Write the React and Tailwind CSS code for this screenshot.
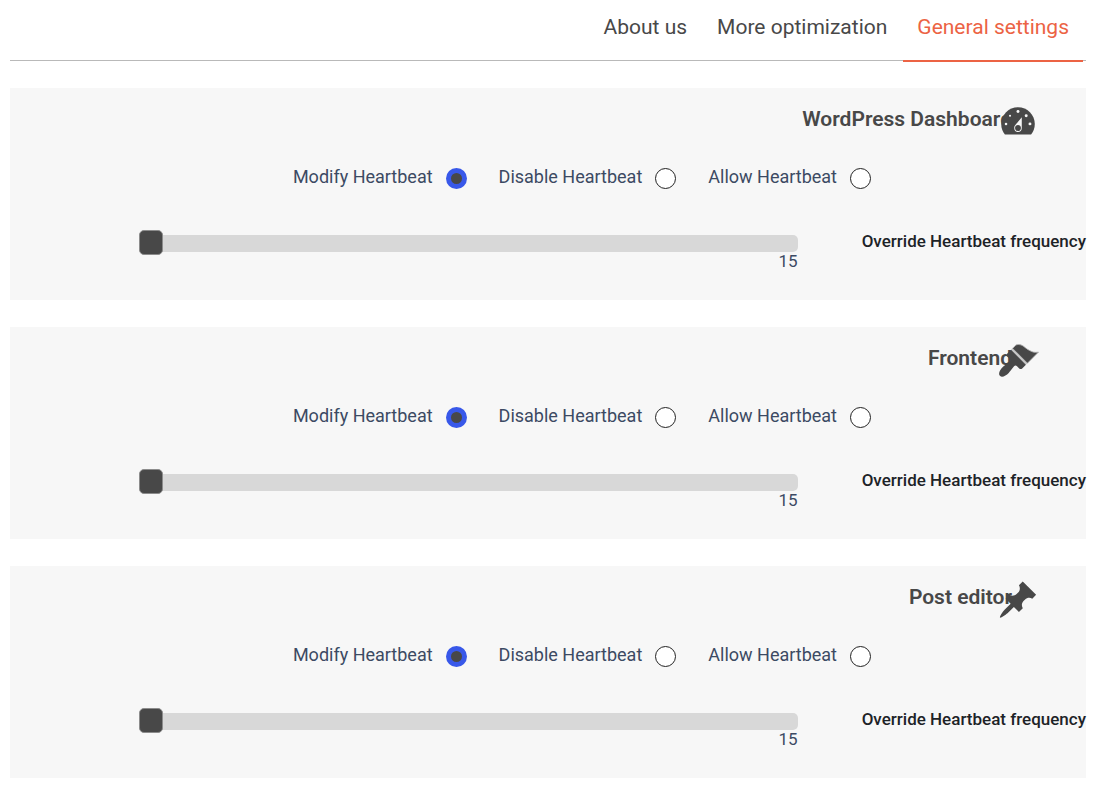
import React, { useState } from 'react';
import clsx from 'clsx';

const tabs = ['About us', 'More optimization', 'General settings'];
const modes = ['Modify Heartbeat', 'Disable Heartbeat', 'Allow Heartbeat'];

const DashboardIcon = () => (
  <svg viewBox="0 0 20 20" className="size-[42px]" fill="currentColor" aria-hidden="true">
    <path d="M3.76 16h12.48c1.1-1.37 1.76-3.11 1.76-5 0-4.42-3.58-8-8-8s-8 3.58-8 8c0 1.89.66 3.63 1.76 5z" />
    <g className="fill-[#f7f7f7]">
      <circle cx="10" cy="5" r="0.7" />
      <circle cx="6.2" cy="7" r="0.5" />
      <circle cx="13.9" cy="7" r="0.7" />
      <circle cx="4.3" cy="10.9" r="0.6" />
      <circle cx="15.7" cy="10.9" r="0.7" />
      <path
        fillRule="evenodd"
        d="M11.8 7.7v5.1c0 1.1-.7 2-1.8 2s-1.8-.9-1.8-2c0-.57.24-1.08.63-1.45zM11.4 12.8c0-.8-.6-1.4-1.4-1.4s-1.4.6-1.4 1.4.6 1.5 1.4 1.5 1.4-.7 1.4-1.5z"
      />
    </g>
  </svg>
);

const BrushIcon = () => (
  <svg viewBox="0 0 20 20" className="size-[42px]" fill="currentColor" aria-hidden="true">
    <path className="fill-[#c8c8c8]" d="M6.7 4.7l.71-.71 7.07 7.07-.71.71z" />
    <path
      className="stroke-[#b4b4b4]"
      strokeWidth="0.4"
      d="M14.48 11.06L7.41 3.99l1.5-1.5c.5-.56 2.3-.47 3.51.32 1.21.8 1.43 1.28 2.91 2.1 1.18.64 2.45 1.26 4.45.85z"
    />
    <path d="M13.77 11.77L6.7 4.7 4.93 6.47c-.39.39-.39 1.02 0 1.41l1.06 1.06c.39.39.39 1.03 0 1.42-.6.6-1.43 1.11-2.21 1.69-.35.26-.7.53-1.01.84C1.43 14.23.4 16.08 1.4 17.07c.99 1 2.84-.03 4.18-1.36.31-.31.58-.66.85-1.02.57-.78 1.08-1.61 1.69-2.21.39-.39 1.02-.39 1.41 0l1.06 1.06c.39.39 1.02.39 1.41 0z" />
  </svg>
);

const PinIcon = () => (
  <svg viewBox="0 0 20 20" className="size-[42px]" fill="currentColor" aria-hidden="true">
    <path d="M10.44 3.02l1.82-1.82 6.36 6.35-1.83 1.82c-1.05-.68-2.48-.57-3.41.36l-.75.75c-.92.93-1.04 2.35-.35 3.41l-1.83 1.82-2.41-2.41-2.8 2.79c-.42.42-3.38 2.71-3.8 2.29s1.86-3.39 2.28-3.81l2.79-2.79L4.1 9.36l1.83-1.82c1.05.69 2.48.57 3.4-.36l.75-.75c.93-.92 1.05-2.35.36-3.41z" />
  </svg>
);

const sections = [
  { id: 'dashboard', title: 'WordPress Dashboard', icon: DashboardIcon },
  { id: 'frontend', title: 'Frontend', icon: BrushIcon },
  { id: 'editor', title: 'Post editor', icon: PinIcon },
];

const HeartbeatCard = ({ id, title, icon: Icon }) => {
  const [mode, setMode] = useState(modes[0]);
  const [frequency, setFrequency] = useState(15);

  return (
    <section className="bg-[#f7f7f7] pt-[13px] pb-[29px]">
      <div className="flex items-start justify-end pr-[47px] text-[#484848]">
        <h2 className="text-[21px] leading-9 font-semibold">{title}</h2>
        <span className="relative -ml-[15px]">
          <Icon />
        </span>
      </div>

      <div className="mt-[21px] flex justify-end gap-8 pr-[215px]">
        {modes.map((name) => (
          <label key={name} className="flex items-center gap-[13px] text-[18px] leading-6 text-[#3c4a63]">
            {name}
            <input
              type="radio"
              name={id}
              checked={mode === name}
              onChange={() => setMode(name)}
              className="mt-1 size-[21px] appearance-none rounded-full border border-[#222] bg-white checked:border-[5px] checked:border-[#3858e9] checked:bg-[#484848]"
            />
          </label>
        ))}
      </div>

      <div className="mt-[41px] flex items-start gap-16 pl-[129px]">
        <div className="flex flex-1 flex-col">
          <input
            id={`${id}-frequency`}
            type="range"
            min="15"
            max="120"
            value={frequency}
            onChange={(e) => setFrequency(Number(e.target.value))}
            className="h-[26px] w-full appearance-none bg-transparent [&::-webkit-slider-runnable-track]:h-[17px] [&::-webkit-slider-runnable-track]:rounded-[5px] [&::-webkit-slider-runnable-track]:bg-[#d8d8d8] [&::-webkit-slider-thumb]:-mt-[5px] [&::-webkit-slider-thumb]:h-[25px] [&::-webkit-slider-thumb]:w-6 [&::-webkit-slider-thumb]:appearance-none [&::-webkit-slider-thumb]:rounded-[5px] [&::-webkit-slider-thumb]:border [&::-webkit-slider-thumb]:border-[#8c8c8c] [&::-webkit-slider-thumb]:bg-[#484848]"
          />
          <output htmlFor={`${id}-frequency`} className="-mt-[5px] text-right text-[17px] leading-5 text-[#3c4a63]">
            {frequency}
          </output>
        </div>
        <label htmlFor={`${id}-frequency`} className="text-[17px] leading-[22px] font-medium text-[#1d2327]">
          Override Heartbeat frequency
        </label>
      </div>
    </section>
  );
};

const App = () => {
  const [active, setActive] = useState('General settings');

  return (
    <div className="pr-[22px] pb-5 pl-[10px] font-['Roboto',sans-serif]">
      <nav className="flex justify-end gap-0.5 border-b border-[#b9b9b9] pr-[3px]">
        {tabs.map((tab) => (
          <a
            key={tab}
            href="#"
            onClick={() => setActive(tab)}
            className={clsx(
              '-mb-0.5 border-b-2 px-[14px] pt-[13px] pb-[19px] text-[21px] leading-7',
              active === tab ? 'border-[#ec6344] text-[#ec6344]' : 'border-transparent text-[#484848]'
            )}
          >
            {tab}
          </a>
        ))}
      </nav>

      <main className="mt-[27px] flex flex-col gap-[27px]">
        {sections.map((section) => (
          <HeartbeatCard key={section.id} {...section} />
        ))}
      </main>
    </div>
  );
};

export default App;
